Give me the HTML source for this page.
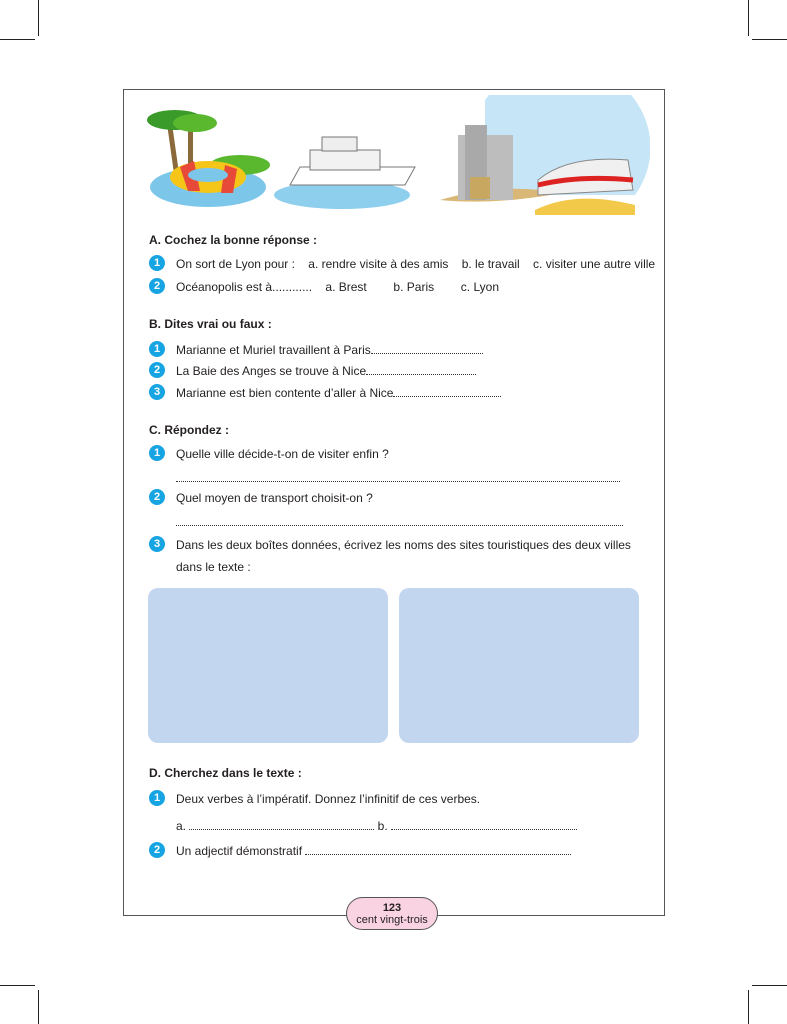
<!DOCTYPE html>
<html><head><meta charset="utf-8"><style>
body{margin:0;width:787px;height:1024px;background:#fff;position:relative;overflow:hidden;font-family:"Liberation Sans",Arial,sans-serif;color:#231f20}
.t{position:absolute;font-size:12px;line-height:16px;white-space:nowrap;top:0}
.h{font-weight:bold;left:149px}
.n{position:absolute;left:149px;width:16px;height:16px;border-radius:50%;background:#17a4e2;color:#fff;font-weight:bold;font-size:11px;line-height:16px;text-align:center}
.d{display:inline-block;border-bottom:1px dotted #333;height:11px;vertical-align:baseline}
.m{position:absolute;background:#222}
.box{position:absolute;top:588px;width:240px;height:155px;background:#c3d6ef;border-radius:10px}
</style></head><body>
<div class="m" style="left:38px;top:0;width:1px;height:36px"></div>
<div class="m" style="left:0;top:39px;width:35px;height:1px"></div>
<div class="m" style="left:748px;top:0;width:1px;height:36px"></div>
<div class="m" style="left:752px;top:39px;width:35px;height:1px"></div>
<div class="m" style="left:38px;top:990px;width:1px;height:34px"></div>
<div class="m" style="left:0;top:985px;width:35px;height:1px"></div>
<div class="m" style="left:748px;top:990px;width:1px;height:34px"></div>
<div class="m" style="left:752px;top:985px;width:35px;height:1px"></div>
<div style="position:absolute;left:123px;top:89px;width:540px;height:825px;border:1px solid #555"></div>
<svg style="position:absolute;left:140px;top:95px" width="510" height="120">
<ellipse cx="68" cy="92" rx="58" ry="20" fill="#7cc6ea"/>
<rect x="30" y="20" width="5" height="60" fill="#8a6a3a" transform="rotate(-8 32 50)"/>
<rect x="48" y="25" width="5" height="55" fill="#8a6a3a"/>
<ellipse cx="35" cy="25" rx="28" ry="10" fill="#3a9a2a"/>
<ellipse cx="55" cy="28" rx="22" ry="9" fill="#5ab82e"/>
<ellipse cx="100" cy="70" rx="30" ry="10" fill="#5ab82e"/>
<ellipse cx="68" cy="82" rx="38" ry="16" fill="#f5c518"/>
<path d="M40 72 l14 -6 l6 30 l-12 0z" fill="#e84a3a"/><path d="M85 70 l12 4 l-4 24 l-12 0z" fill="#e84a3a"/>
<ellipse cx="68" cy="80" rx="20" ry="7" fill="#7cc6ea"/>
<ellipse cx="202" cy="100" rx="68" ry="14" fill="#8ecfee"/>
<path d="M150 90 l115 0 l10 -18 l-115 0 z" fill="#fff" stroke="#777"/>
<rect x="170" y="55" width="70" height="20" fill="#f2f2f2" stroke="#777"/>
<rect x="182" y="42" width="35" height="14" fill="#eee" stroke="#777"/>
<path d="M345 5 a80 75 0 0 1 150 95 l-150 0z" fill="#c6e6f7"/>
<path d="M300 105 q50 -15 100 -10 l10 5 q-60 10 -110 5z" fill="#d9b776"/>
<rect x="318" y="40" width="55" height="65" fill="#bdbdbd"/>
<rect x="325" y="30" width="22" height="75" fill="#a9a9a9"/>
<rect x="330" y="82" width="20" height="22" fill="#c8a860"/>
<path d="M395 115 q40 -20 100 -5 l0 10 l-100 0z" fill="#f3c94a"/>
<path d="M398 85 q30 -25 90 -20 l5 30 l-95 5z" fill="#f0f0f0" stroke="#888"/>
<path d="M398 90 q40 -10 95 -5" stroke="#d22" stroke-width="5" fill="none"/>
</svg>
<div class="t h" style="top:232px">A. Cochez la bonne réponse :</div>
<div class="n" style="top:255px">1</div>
<div class="t" style="left:176px;top:256px">On sort de Lyon pour :&nbsp;&nbsp;&nbsp; a. rendre visite à des amis &nbsp;&nbsp; b. le travail &nbsp;&nbsp; c. visiter une autre ville</div>
<div class="n" style="top:278px">2</div>
<div class="t" style="left:176px;top:279px">Océanopolis est à............ &nbsp;&nbsp; a. Brest &nbsp;&nbsp;&nbsp;&nbsp;&nbsp;&nbsp; b. Paris &nbsp;&nbsp;&nbsp;&nbsp;&nbsp;&nbsp; c. Lyon</div>
<div class="t h" style="top:316px">B. Dites vrai ou faux :</div>
<div class="n" style="top:341px">1</div>
<div class="t" style="left:176px;top:342px">Marianne et Muriel travaillent à Paris<span class="d" style="width:112px"></span></div>
<div class="n" style="top:362px">2</div>
<div class="t" style="left:176px;top:363px">La Baie des Anges se trouve à Nice<span class="d" style="width:110px"></span></div>
<div class="n" style="top:384px">3</div>
<div class="t" style="left:176px;top:385px">Marianne est bien contente d’aller à Nice<span class="d" style="width:108px"></span></div>
<div class="t h" style="top:422px">C. Répondez :</div>
<div class="n" style="top:445px">1</div>
<div class="t" style="left:176px;top:446px">Quelle ville décide-t-on de visiter enfin ?</div>
<div class="t" style="left:176px;top:470px"><span class="d" style="width:444px"></span></div>
<div class="n" style="top:489px">2</div>
<div class="t" style="left:176px;top:490px">Quel moyen de transport choisit-on ?</div>
<div class="t" style="left:176px;top:514px"><span class="d" style="width:447px"></span></div>
<div class="n" style="top:536px">3</div>
<div class="t" style="left:176px;top:537px">Dans les deux boîtes données, écrivez les noms des sites touristiques des deux villes</div>
<div class="t" style="left:176px;top:559px">dans le texte :</div>
<div class="box" style="left:148px"></div>
<div class="box" style="left:399px"></div>
<div class="t h" style="top:765px">D. Cherchez dans le texte :</div>
<div class="n" style="top:790px">1</div>
<div class="t" style="left:176px;top:791px">Deux verbes à l’impératif. Donnez l’infinitif de ces verbes.</div>
<div class="t" style="left:176px;top:818px">a. <span class="d" style="width:185px"></span> b. <span class="d" style="width:186px"></span></div>
<div class="n" style="top:842px">2</div>
<div class="t" style="left:176px;top:843px">Un adjectif démonstratif <span class="d" style="width:266px"></span></div>
<div style="position:absolute;left:346px;top:897px;width:92px;height:33px;border:1px solid #555;border-radius:17px;background:#f9d3e1;text-align:center;font-size:11px;line-height:12px;padding-top:4px;box-sizing:border-box"><b>123</b><br>cent vingt-trois</div>
</body></html>
